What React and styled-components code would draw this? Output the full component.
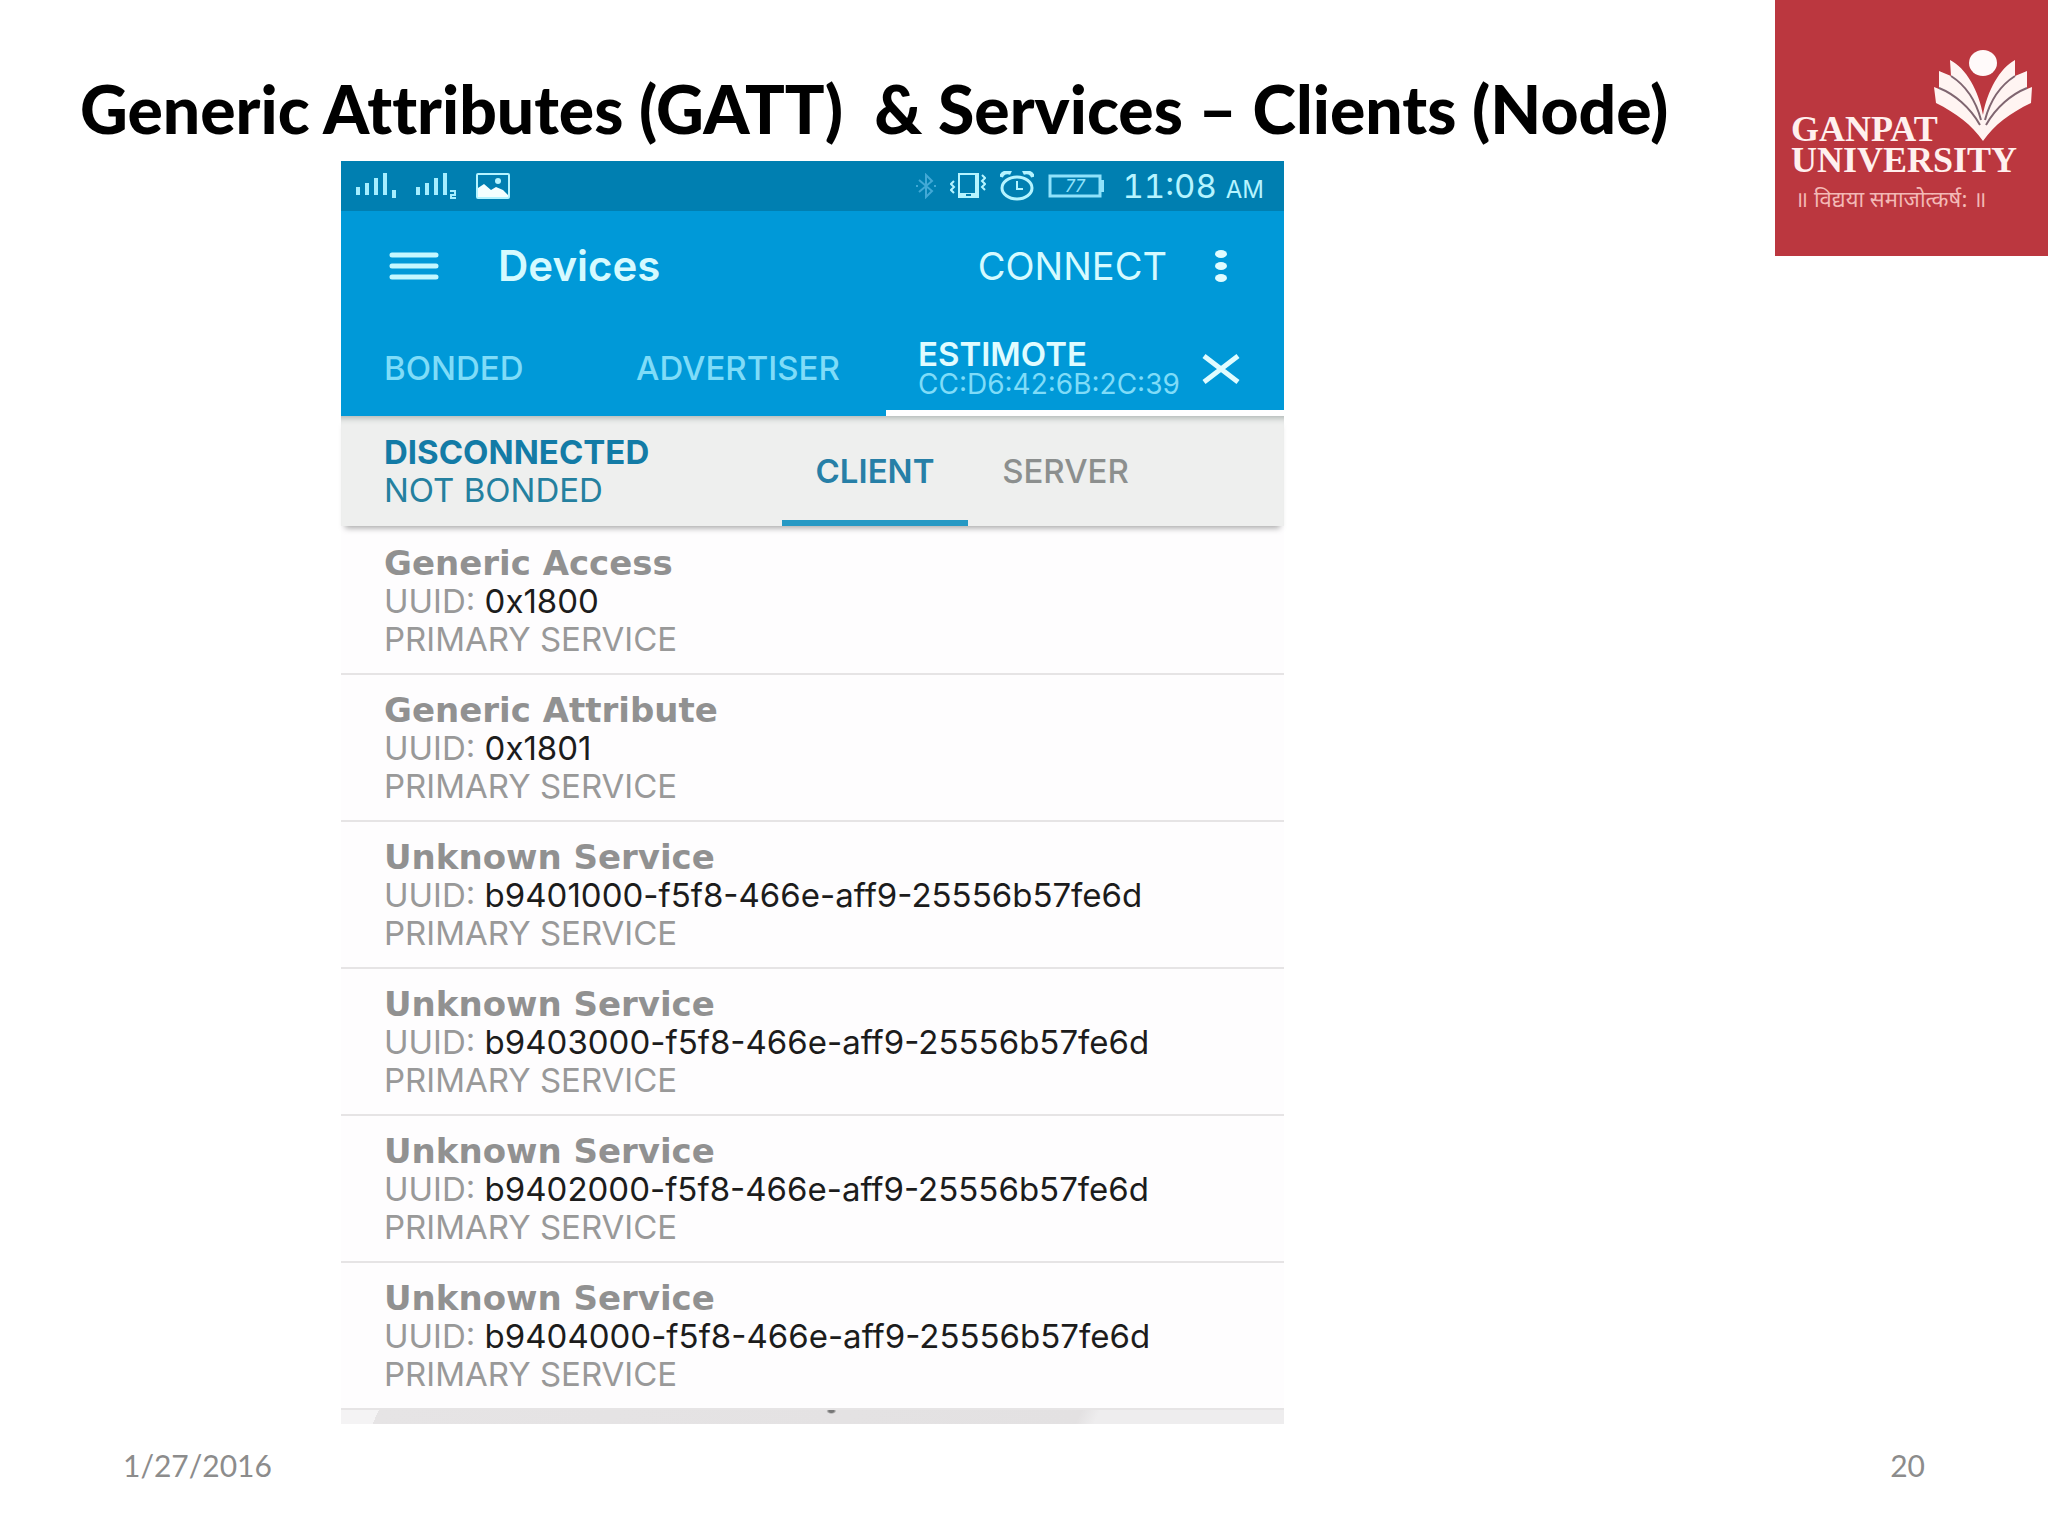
import React from 'react'
import styled, { createGlobalStyle } from "styled-components";

const services = [
  { name: "Generic Access", uuid: "0x1800" },
  { name: "Generic Attribute", uuid: "0x1801" },
  { name: "Unknown Service", uuid: "b9401000-f5f8-466e-aff9-25556b57fe6d" },
  { name: "Unknown Service", uuid: "b9403000-f5f8-466e-aff9-25556b57fe6d" },
  { name: "Unknown Service", uuid: "b9402000-f5f8-466e-aff9-25556b57fe6d" },
  { name: "Unknown Service", uuid: "b9404000-f5f8-466e-aff9-25556b57fe6d" },
];

export default function App() {
  return (
    <>
      <GlobalStyle />
      <SSlide>
        <STitle>{"Generic Attributes (GATT)  & Services – Clients (Node)"}</STitle>
        <UniversityLogo />
        <SPhone>
          <StatusBar />
          <SToolbar>
            <SIconButton aria-label="Menu"><MenuIcon /></SIconButton>
            <SScreenName>Devices</SScreenName>
            <SConnect>CONNECT</SConnect>
            <SIconButton aria-label="More options"><MoreIcon /></SIconButton>
          </SToolbar>
          <STabs>
            <STab>BONDED</STab>
            <STab $second>ADVERTISER</STab>
            <SDeviceTab>
              <SDevice>
                <b>ESTIMOTE</b>
                <SAddress>CC:D6:42:6B:2C:39</SAddress>
              </SDevice>
              <SIconButton aria-label="Close tab"><CloseIcon /></SIconButton>
            </SDeviceTab>
          </STabs>
          <SConnection>
            <SState>
              <b>DISCONNECTED</b>
              <span>NOT BONDED</span>
            </SState>
            <SRole $active>CLIENT</SRole>
            <SRole>SERVER</SRole>
          </SConnection>
          <SList>
            {services.map((service) => (
              <SService key={service.uuid}>
                <SName>{service.name}</SName>
                <SLine>UUID: <SUuid>{service.uuid}</SUuid></SLine>
                <SLine>PRIMARY SERVICE</SLine>
              </SService>
            ))}
          </SList>
          <SNextRow />
        </SPhone>
        <SFooter>
          <span>1/27/2016</span>
          <span>20</span>
        </SFooter>
      </SSlide>
    </>
  )
}

const UniversityLogo = () => (
  <SLogo>
    <SBook viewBox="0 0 98 92" aria-hidden="true">
      <ellipse cx="49" cy="14" rx="14" ry="13" fill="#fffafa" />
      <g fill="#fff4f2">
        <path d="M16 11C32 19 45 42 49 66V92C38 76 22 64 2 54L0 38 5 40V22L17 27Z" />
        <path d="M81 11C66 19 53 42 49 66V92C60 76 76 64 97 54L98 38 93 40V22L81 27Z" />
      </g>
      <g fill="none" stroke="#7f6570" strokeWidth="2">
        <path d="M17 27C31 36 42 52 47 71M5 39C20 45 36 58 46 76" />
        <path d="M81 27C67 36 56 52 51 71M93 39C78 45 62 58 52 76" />
      </g>
    </SBook>
    <SLogoName>GANPAT<br />UNIVERSITY</SLogoName>
    <SMotto lang="sa">॥ विद्यया समाजोत्कर्ष: ॥</SMotto>
  </SLogo>
)

const StatusBar = () => (
  <SStatusBar>
    <SSignals>
      <SignalIcon />
      <SignalIcon second />
      <svg width="34" height="26" viewBox="0 0 34 26">
        <rect x="1" y="1" width="32" height="24" rx="1" fill="none" stroke="#b5f4ff" strokeWidth="2" />
        <path d="M2 15L8 11 15 17 20 14 27 17 32 22V24H2Z" fill="#f4ffff" />
        <circle cx="22" cy="8" r="3" fill="#b5f4ff" />
      </svg>
    </SSignals>
    <SIndicators>
      <svg width="20" height="26" viewBox="0 0 20 26" fill="none" stroke="#42a9d6" strokeWidth="2">
        <path d="M3 7L16 18 10 24V2L16 8 3 19M0 13H2M18 13H20" />
      </svg>
      <svg width="36" height="26" viewBox="0 0 36 26" fill="none" stroke="#b5f4ff" strokeWidth="2">
        <rect x="9" y="1" width="19" height="23" />
        <path d="M9 22H28M27 1V24" strokeWidth="4" />
        <path d="M4 8L1 11 4 14 1 17 4 20M32 2L35 5 32 8 35 11 32 14 35 17" />
        <path d="M16 22H21" stroke="#007fb1" />
      </svg>
      <svg width="34" height="30" viewBox="0 0 34 30" fill="none" stroke="#b5f4ff" strokeWidth="3">
        <ellipse cx="17" cy="17" rx="15" ry="11" />
        <path d="M17 10V18H23" strokeWidth="2" />
        <path d="M1 6C2 2 7 0 11 2M33 6C32 2 27 0 23 2" strokeWidth="4" />
      </svg>
      <svg width="56" height="24" viewBox="0 0 56 24" fill="none" stroke="#8fe2fb" strokeWidth="3">
        <rect x="2" y="2" width="50" height="20" />
        <path d="M54 6V18" strokeWidth="4" />
        <text x="27" y="18" textAnchor="middle" fontSize="17" fontStyle="italic" fill="#8fe2fb" stroke="none">77</text>
      </svg>
      <STime>11:08 <small>AM</small></STime>
    </SIndicators>
  </SStatusBar>
)

const SignalIcon = ({ second }) => (
  <svg width="42" height="26" viewBox="0 0 42 26" stroke="#a5eeff" strokeWidth="4">
    <path d="M2 14V22M11 10V22M20 5V22M29 0V22" />
    {second
      ? <path d="M34 18H39V22H35V25H40" fill="none" strokeWidth="2" />
      : <path d="M38 17V25" strokeWidth="4" />}
  </svg>
)

const MenuIcon = () => (
  <svg width="50" height="28" viewBox="0 0 50 28" stroke="#c4f7ff" strokeWidth="5" strokeLinecap="round">
    <path d="M3 3H47M3 14H47M3 25H47" />
  </svg>
)

const MoreIcon = () => (
  <svg width="12" height="34" viewBox="0 0 12 34" fill="#e0fcff">
    <ellipse cx="6" cy="5" rx="6" ry="4" />
    <ellipse cx="6" cy="17" rx="6" ry="4" />
    <ellipse cx="6" cy="29" rx="6" ry="4" />
  </svg>
)

const CloseIcon = () => (
  <svg width="38" height="30" viewBox="0 0 38 30" stroke="#e0fcff" strokeWidth="5">
    <path d="M2 2L36 28M36 2L2 28" />
  </svg>
)

const GlobalStyle = createGlobalStyle`
  * {
    box-sizing: border-box;
  }
  body {
    margin: 0;
    background-color: #fff;
  }
  button {
    margin: 0;
    padding: 0;
    border: none;
    background: none;
    font: inherit;
    color: inherit;
    text-align: left;
  }
  svg {
    display: block;
    flex-shrink: 0;
  }
`

const SSlide = styled.main`
  display: grid;
  grid-template-columns: 341fr 943fr 491fr 273fr;
  grid-template-rows: 161px auto 1fr;
  min-height: 100vh;
`

const STitle = styled.h1`
  grid-area: 1 / 1 / 2 / 4;
  margin: 0;
  padding: 71px 0 0 80px;
  font-family: Lato, sans-serif;
  font-size: 66px;
  line-height: 76px;
  font-weight: 900;
  font-variant-ligatures: none;
  color: #000;
  white-space: pre;
`

const SLogo = styled.div`
  grid-area: 1 / 4 / 3 / 5;
  display: flex;
  flex-direction: column;
  align-self: start;
  padding: 49px 16px 0;
  height: 256px;
  background-color: #bb373f;
  color: #fff0ee;
`

const SBook = styled.svg`
  align-self: flex-end;
  width: 98px;
  height: 92px;
  margin-bottom: -27px;
`

const SLogoName = styled.div`
  font-family: "Liberation Serif", serif;
  font-size: 36px;
  line-height: 31px;
  font-weight: 700;
`

const SMotto = styled.div`
  padding: 14px 4px;
  font-family: "Noto Sans Devanagari", "Noto Sans", sans-serif;
  font-size: 22px;
  line-height: 24px;
  color: #f3b9b6;
  white-space: nowrap;
`

const SPhone = styled.section`
  grid-area: 2 / 2 / 3 / 3;
  font-family: Inter, sans-serif;
  font-size: 33px;
  background-color: #fefdfe;
`

const SStatusBar = styled.div`
  display: flex;
  justify-content: space-between;
  align-items: center;
  height: 50px;
  padding: 0 20px 0 15px;
  background-color: #007fb1;
  color: #b5f4ff;
`

const SSignals = styled.div`
  display: flex;
  align-items: center;
  gap: 18px;
`

const SIndicators = styled.div`
  display: flex;
  align-items: center;
  gap: 14px;
`

const STime = styled.time`
  padding-left: 4px;
  font-variant-numeric: tabular-nums;
  small {
    font-size: 24px;
  }
`

const SToolbar = styled.header`
  display: flex;
  align-items: center;
  height: 109px;
  padding: 0 57px 0 48px;
  background-color: #0099d8;
  color: #d5faff;
`

const SIconButton = styled.button`
  display: flex;
`

const SScreenName = styled.h2`
  flex: 1;
  margin: 0;
  padding-left: 59px;
  font-size: 42px;
  font-weight: 600;
`

const SConnect = styled.button`
  margin-right: 48px;
  font-size: 38px;
`

const STabs = styled.nav`
  display: grid;
  grid-template-columns: 295fr 250fr 398fr;
  height: 96px;
  background-color: #0099d8;
  color: #7fdcf8;
`

const STab = styled.button`
  padding-left: ${(props) => (props.$second ? "0" : "43px")};
  font-weight: 500;
`

const SDeviceTab = styled.div`
  display: flex;
  justify-content: space-between;
  align-items: center;
  padding: 8px 44px 0 32px;
  border-bottom: 6px solid #fff;
`

const SDevice = styled.button`
  display: flex;
  flex-direction: column;
  line-height: 30px;
  b {
    font-weight: 600;
    color: #e0fcff;
  }
`

const SAddress = styled.span`
  font-size: 28px;
`

const SConnection = styled.div`
  display: grid;
  grid-template-columns: 441fr 186fr 195fr 121fr;
  height: 110px;
  background-color: #eeefee;
  box-shadow: inset 0 8px 6px -6px #aab3af, 0 6px 6px -4px #a5a5a5;
`

const SState = styled.div`
  display: flex;
  flex-direction: column;
  justify-content: center;
  padding-left: 43px;
  line-height: 38px;
  color: #24809f;
  b {
    font-weight: 700;
    color: #137ba6;
  }
`

const SRole = styled.button`
  padding: 6px 0 0;
  border-bottom: 6px solid ${(props) => (props.$active ? "#2699c4" : "transparent")};
  font-weight: ${(props) => (props.$active ? 600 : 500)};
  color: ${(props) => (props.$active ? "#277fa7" : "#8c8f8e")};
  text-align: center;
`

const SList = styled.ul`
  margin: 0;
  padding: 2px 0 0;
  list-style: none;
`

const SService = styled.li`
  height: 147px;
  padding: 16px 0 0 43px;
  border-bottom: 2px solid #e6e4e5;
  line-height: 38px;
`

const SName = styled.h3`
  margin: 0;
  font-family: "DejaVu Sans", sans-serif;
  font-size: 34px;
  font-weight: 700;
  color: #919191;
`

const SLine = styled.p`
  margin: 0;
  color: #999;
`

const SUuid = styled.span`
  color: #1c1c1c;
`

const SNextRow = styled.div`
  height: 14px;
  background:
    radial-gradient(ellipse 5px 3px at 52% 1px, #777 50%, transparent),
    linear-gradient(115deg, #f4f3f4 4%, #e6e4e5 4%, #e3e1e2 78%, #eeedee 80%);
`

const SFooter = styled.footer`
  grid-area: 3 / 1 / 4 / 5;
  display: flex;
  justify-content: space-between;
  padding: 22px 123px 0;
  font-family: Lato, sans-serif;
  font-size: 30px;
  line-height: 38px;
  color: #8c8c8c;
`
